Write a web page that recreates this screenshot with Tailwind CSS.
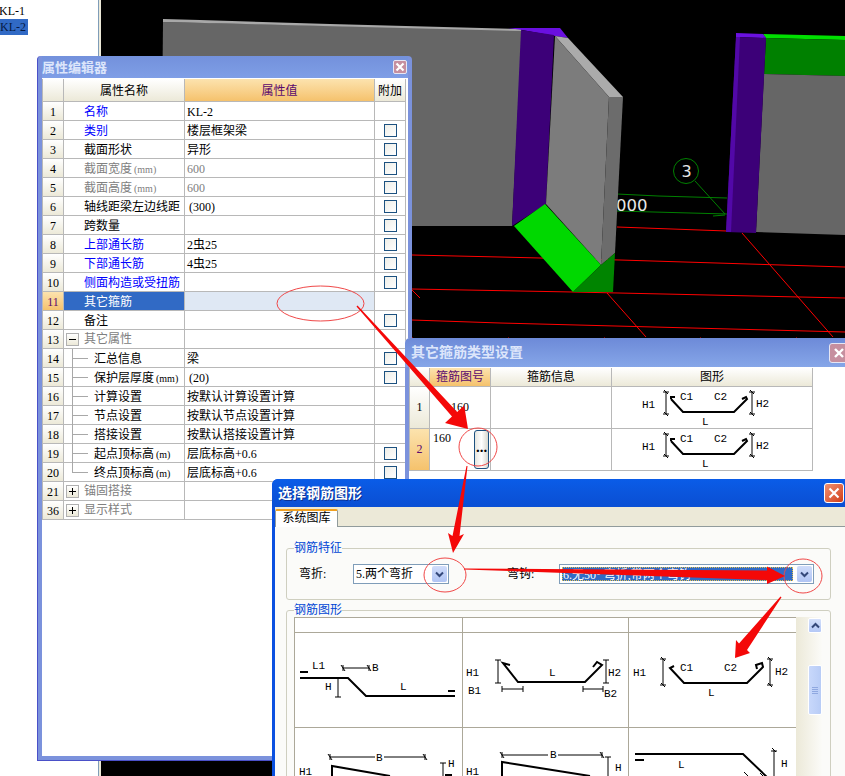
<!DOCTYPE html>
<html lang="zh">
<head>
<meta charset="utf-8">
<script src="https://cdn.jsdelivr.net/npm/@tailwindcss/browser@4"></script>
<title>属性编辑器</title>
</head>
<body class="m-0">
<div class="relative w-[845px] h-[776px] overflow-hidden bg-black text-black text-[12px] [font-family:'Liberation_Serif','Noto_Sans_CJK_SC',sans-serif]">

  <!-- 3D scene -->
  <svg class="absolute left-0 top-0" width="845" height="776" viewBox="0 0 845 776">
    <g stroke="#ff0000" stroke-width="1" fill="none">
      <path d="M412 255L500 257L620 260L845 267"/>
      <path d="M412 289L573 292L845 298"/>
      <path d="M412 320L500 323L845 332"/>
      <path d="M617 227L727 231"/>
      <path d="M742 233L833 337"/>
      <path d="M607 293L646 337"/>
      <path d="M412 290L420 298"/>
      <path d="M412 338L845 338" stroke-dasharray="1 95"/>
    </g>
    <g stroke="#008000" stroke-width="1" fill="none">
      <path d="M617 194L658 196L727 198"/>
      <path d="M617 211L727 214"/>
      <path d="M695 181L725 214"/>
      <path d="M713 216L725 215"/>
      <circle cx="686" cy="171" r="12.5"/>
    </g>
    <text x="616" y="211" fill="#e8e8e8" font-size="16.5" font-family="'DejaVu Sans',sans-serif">000</text>
    <text x="686.5" y="177" fill="#e8e8e8" font-size="16" text-anchor="middle" font-family="'DejaVu Sans',sans-serif">3</text>
    <polygon points="163,22 522,30 512,226 161,226" fill="#666666"/>
    <polygon points="163,19 200,20 330,24 521,29 522,31 163,22" fill="#a8a8a8"/>
    <polygon points="508,28 560,28 568,38 555,36 522,30" fill="#6a10e0"/>
    <polygon points="521,30 554,35 546,204 512,226" fill="#3c0078"/>
    <polygon points="555,36 568,38 623,97 609,97" fill="#ababab"/>
    <polygon points="555,36 609,97 601,265 546,204" fill="#7c7c7c"/>
    <polygon points="609,97 623,97 615,253 601,265" fill="#6c6c6c"/>
    <polygon points="514,226 545,204 601,265 573,292" fill="#00d800"/>
    <polygon points="573,292 601,265 615,253 613,292" fill="#008400"/>
    <polygon points="763,34 845,36 845,40 766,38" fill="#00e000"/>
    <polygon points="766,38 845,40 845,76 764,74" fill="#008000"/>
    <polygon points="764,74 845,76 845,235 756,232" fill="#666666"/>
    <polygon points="736,33 763,34 766,38 736,37" fill="#6a10e0"/>
    <polygon points="736,37 766,38 756,233 726,232" fill="#3c0078"/>
    <polygon points="736,37 740,37 731,232 726,232" fill="#5208a8"/>
  </svg>

  <!-- Left list panel -->
  <div class="absolute left-0 top-0 w-[101px] h-full bg-white border-r-[2px] border-[#ece9d8]">
    <div class="w-[99px] h-full border-r border-[#7f9db9] pt-[4px]">
      <div class="h-[15px] leading-[15px] -ml-[1px]">KL-1</div>
      <div class="h-[16px] w-[28px] leading-[16px] bg-[#316ac5] text-[#061a44] pl-0">KL-2</div>
    </div>
  </div>

  <!-- Property editor window -->
  <div class="absolute left-[37px] top-[56px] w-[375px] h-[705px] flex flex-col bg-[#7b92dc] rounded-t-[4px] border-l border-b border-[#4a50c8] px-[4px] pb-[4px]">
    <div class="h-[22px] shrink-0 flex items-center justify-between pl-[0px] pr-[1px] bg-linear-to-b from-[#7391dc] to-[#7f9ee6]">
      <span class="font-bold text-[13px] text-[#dde6fb] leading-[22px] pt-[2px]">属性编辑器</span>
      <span class="w-[14px] h-[14px] rounded-[2px] bg-[#c68f9f] border border-[#e6e6f4] flex items-center justify-center">
        <svg width="10" height="10" viewBox="0 0 10 10"><path d="M1.5 1.5L8.5 8.5M8.5 1.5L1.5 8.5" stroke="#fff" stroke-width="2.2"/></svg>
      </span>
    </div>
    <div class="flex-1 bg-white w-[366px] pt-[1px]">
      <div class="w-[364px] border-l border-[#b8b8b8]">
        <div class="flex h-[23px] border-b border-[#b8b8b8] leading-[24px] text-center">
          <div class="w-[21px] border-r border-[#b8b8b8] bg-linear-to-b from-white to-[#ece9d8]"></div>
          <div class="w-[121px] border-r border-[#b8b8b8] bg-linear-to-b from-white to-[#ece9d8]">属性名称</div>
          <div class="w-[190px] border-r border-[#b8b8b8] bg-linear-to-b from-[#fce3ae] to-[#f5c26c] text-[#5a0a6e]">属性值</div>
          <div class="w-[31px] border-r border-[#b8b8b8] bg-linear-to-b from-white to-[#ece9d8]">附加</div>
        </div>

        <div class="flex h-[19px] border-b border-[#b8b8b8] leading-[21px] whitespace-nowrap">
          <div class="w-[21px] border-r border-[#b8b8b8] bg-linear-to-b from-white to-[#ece9d8] text-center">1</div>
          <div class="w-[121px] border-r border-[#b8b8b8] pl-[20px] text-[#0000ff]">名称</div>
          <div class="w-[190px] border-r border-[#b8b8b8] pl-[2px]">KL-2</div>
          <div class="w-[31px] border-r border-[#b8b8b8]"></div>
        </div>
        <div class="flex h-[19px] border-b border-[#b8b8b8] leading-[21px] whitespace-nowrap">
          <div class="w-[21px] border-r border-[#b8b8b8] bg-linear-to-b from-white to-[#ece9d8] text-center">2</div>
          <div class="w-[121px] border-r border-[#b8b8b8] pl-[20px] text-[#0000ff]">类别</div>
          <div class="w-[190px] border-r border-[#b8b8b8] pl-[2px]">楼层框架梁</div>
          <div class="w-[31px] border-r border-[#b8b8b8] flex items-center justify-center"><span class="w-[13px] h-[13px] border border-[#1c5180] bg-linear-to-br from-[#eeeee8] to-white"></span></div>
        </div>
        <div class="flex h-[19px] border-b border-[#b8b8b8] leading-[21px] whitespace-nowrap">
          <div class="w-[21px] border-r border-[#b8b8b8] bg-linear-to-b from-white to-[#ece9d8] text-center">3</div>
          <div class="w-[121px] border-r border-[#b8b8b8] pl-[20px]">截面形状</div>
          <div class="w-[190px] border-r border-[#b8b8b8] pl-[2px]">异形</div>
          <div class="w-[31px] border-r border-[#b8b8b8] flex items-center justify-center"><span class="w-[13px] h-[13px] border border-[#1c5180] bg-linear-to-br from-[#eeeee8] to-white"></span></div>
        </div>
        <div class="flex h-[19px] border-b border-[#b8b8b8] leading-[21px] whitespace-nowrap">
          <div class="w-[21px] border-r border-[#b8b8b8] bg-linear-to-b from-white to-[#ece9d8] text-center">4</div>
          <div class="w-[121px] border-r border-[#b8b8b8] pl-[20px] text-[#808080]">截面宽度<span class="text-[10px] pl-[2px]">(mm)</span></div>
          <div class="w-[190px] border-r border-[#b8b8b8] pl-[2px] text-[#808080]">600</div>
          <div class="w-[31px] border-r border-[#b8b8b8] flex items-center justify-center"><span class="w-[13px] h-[13px] border border-[#1c5180] bg-linear-to-br from-[#eeeee8] to-white"></span></div>
        </div>
        <div class="flex h-[19px] border-b border-[#b8b8b8] leading-[21px] whitespace-nowrap">
          <div class="w-[21px] border-r border-[#b8b8b8] bg-linear-to-b from-white to-[#ece9d8] text-center">5</div>
          <div class="w-[121px] border-r border-[#b8b8b8] pl-[20px] text-[#808080]">截面高度<span class="text-[10px] pl-[2px]">(mm)</span></div>
          <div class="w-[190px] border-r border-[#b8b8b8] pl-[2px] text-[#808080]">600</div>
          <div class="w-[31px] border-r border-[#b8b8b8] flex items-center justify-center"><span class="w-[13px] h-[13px] border border-[#1c5180] bg-linear-to-br from-[#eeeee8] to-white"></span></div>
        </div>
        <div class="flex h-[19px] border-b border-[#b8b8b8] leading-[21px] whitespace-nowrap">
          <div class="w-[21px] border-r border-[#b8b8b8] bg-linear-to-b from-white to-[#ece9d8] text-center">6</div>
          <div class="w-[121px] border-r border-[#b8b8b8] pl-[20px]">轴线距梁左边线距</div>
          <div class="w-[190px] border-r border-[#b8b8b8] pl-[4px]">(300)</div>
          <div class="w-[31px] border-r border-[#b8b8b8] flex items-center justify-center"><span class="w-[13px] h-[13px] border border-[#1c5180] bg-linear-to-br from-[#eeeee8] to-white"></span></div>
        </div>
        <div class="flex h-[19px] border-b border-[#b8b8b8] leading-[21px] whitespace-nowrap">
          <div class="w-[21px] border-r border-[#b8b8b8] bg-linear-to-b from-white to-[#ece9d8] text-center">7</div>
          <div class="w-[121px] border-r border-[#b8b8b8] pl-[20px]">跨数量</div>
          <div class="w-[190px] border-r border-[#b8b8b8] pl-[2px]"></div>
          <div class="w-[31px] border-r border-[#b8b8b8] flex items-center justify-center"><span class="w-[13px] h-[13px] border border-[#1c5180] bg-linear-to-br from-[#eeeee8] to-white"></span></div>
        </div>
        <div class="flex h-[19px] border-b border-[#b8b8b8] leading-[21px] whitespace-nowrap">
          <div class="w-[21px] border-r border-[#b8b8b8] bg-linear-to-b from-white to-[#ece9d8] text-center">8</div>
          <div class="w-[121px] border-r border-[#b8b8b8] pl-[20px] text-[#0000ff]">上部通长筋</div>
          <div class="w-[190px] border-r border-[#b8b8b8] pl-[2px]">2虫25</div>
          <div class="w-[31px] border-r border-[#b8b8b8] flex items-center justify-center"><span class="w-[13px] h-[13px] border border-[#1c5180] bg-linear-to-br from-[#eeeee8] to-white"></span></div>
        </div>
        <div class="flex h-[19px] border-b border-[#b8b8b8] leading-[21px] whitespace-nowrap">
          <div class="w-[21px] border-r border-[#b8b8b8] bg-linear-to-b from-white to-[#ece9d8] text-center">9</div>
          <div class="w-[121px] border-r border-[#b8b8b8] pl-[20px] text-[#0000ff]">下部通长筋</div>
          <div class="w-[190px] border-r border-[#b8b8b8] pl-[2px]">4虫25</div>
          <div class="w-[31px] border-r border-[#b8b8b8] flex items-center justify-center"><span class="w-[13px] h-[13px] border border-[#1c5180] bg-linear-to-br from-[#eeeee8] to-white"></span></div>
        </div>
        <div class="flex h-[19px] border-b border-[#b8b8b8] leading-[21px] whitespace-nowrap">
          <div class="w-[21px] border-r border-[#b8b8b8] bg-linear-to-b from-white to-[#ece9d8] text-center">10</div>
          <div class="w-[121px] border-r border-[#b8b8b8] pl-[20px] text-[#0000ff]">侧面构造或受扭筋</div>
          <div class="w-[190px] border-r border-[#b8b8b8] pl-[2px]"></div>
          <div class="w-[31px] border-r border-[#b8b8b8] flex items-center justify-center"><span class="w-[13px] h-[13px] border border-[#1c5180] bg-linear-to-br from-[#eeeee8] to-white"></span></div>
        </div>
        <div class="flex h-[19px] border-b border-[#b8b8b8] leading-[21px] whitespace-nowrap">
          <div class="w-[21px] border-r border-[#b8b8b8] bg-linear-to-b from-[#fce3ae] to-[#f5c26c] text-center text-[#5a0a6e]">11</div>
          <div class="w-[121px] border-r border-[#b8b8b8] pl-[20px] bg-[#316ac5] text-white">其它箍筋</div>
          <div class="w-[190px] border-r border-[#b8b8b8] pl-[2px] bg-[#dfe8f4]"></div>
          <div class="w-[31px] border-r border-[#b8b8b8]"></div>
        </div>
        <div class="flex h-[19px] border-b border-[#b8b8b8] leading-[21px] whitespace-nowrap">
          <div class="w-[21px] border-r border-[#b8b8b8] bg-linear-to-b from-white to-[#ece9d8] text-center">12</div>
          <div class="w-[121px] border-r border-[#b8b8b8] pl-[20px]">备注</div>
          <div class="w-[190px] border-r border-[#b8b8b8] pl-[2px]"></div>
          <div class="w-[31px] border-r border-[#b8b8b8] flex items-center justify-center"><span class="w-[13px] h-[13px] border border-[#1c5180] bg-linear-to-br from-[#eeeee8] to-white"></span></div>
        </div>
        <div class="flex h-[19px] border-b border-[#b8b8b8] leading-[21px] whitespace-nowrap">
          <div class="w-[21px] border-r border-[#b8b8b8] bg-linear-to-b from-white to-[#ece9d8] text-center">13</div>
          <div class="w-[121px] border-r border-[#b8b8b8] pl-[2px] flex items-center text-[#808080]">
            <span class="w-[13px] h-[13px] border border-[#b0b0b0] bg-linear-to-b from-white to-[#ece9d8] flex items-center justify-center mr-[5px]"><span class="w-[7px] h-px bg-black"></span></span>其它属性
          </div>
          <div class="w-[190px] border-r border-[#b8b8b8] pl-[2px]"></div>
          <div class="w-[31px] border-r border-[#b8b8b8]"></div>
        </div>
        <div class="flex h-[19px] border-b border-[#b8b8b8] leading-[21px] whitespace-nowrap">
          <div class="w-[21px] border-r border-[#b8b8b8] bg-linear-to-b from-white to-[#ece9d8] text-center">14</div>
          <div class="w-[121px] border-r border-[#b8b8b8] flex"><span class="w-[16px] h-[19px] ml-[8px] mr-[6px] border-l border-[#a8a8a8]"><span class="block h-[10px] border-b border-[#a8a8a8]"></span></span>汇总信息</div>
          <div class="w-[190px] border-r border-[#b8b8b8] pl-[2px]">梁</div>
          <div class="w-[31px] border-r border-[#b8b8b8] flex items-center justify-center"><span class="w-[13px] h-[13px] border border-[#1c5180] bg-linear-to-br from-[#eeeee8] to-white"></span></div>
        </div>
        <div class="flex h-[19px] border-b border-[#b8b8b8] leading-[21px] whitespace-nowrap">
          <div class="w-[21px] border-r border-[#b8b8b8] bg-linear-to-b from-white to-[#ece9d8] text-center">15</div>
          <div class="w-[121px] border-r border-[#b8b8b8] flex"><span class="w-[16px] h-[19px] ml-[8px] mr-[6px] border-l border-[#a8a8a8]"><span class="block h-[10px] border-b border-[#a8a8a8]"></span></span>保护层厚度<span class="text-[10px] pl-[2px]">(mm)</span></div>
          <div class="w-[190px] border-r border-[#b8b8b8] pl-[4px]">(20)</div>
          <div class="w-[31px] border-r border-[#b8b8b8] flex items-center justify-center"><span class="w-[13px] h-[13px] border border-[#1c5180] bg-linear-to-br from-[#eeeee8] to-white"></span></div>
        </div>
        <div class="flex h-[19px] border-b border-[#b8b8b8] leading-[21px] whitespace-nowrap">
          <div class="w-[21px] border-r border-[#b8b8b8] bg-linear-to-b from-white to-[#ece9d8] text-center">16</div>
          <div class="w-[121px] border-r border-[#b8b8b8] flex"><span class="w-[16px] h-[19px] ml-[8px] mr-[6px] border-l border-[#a8a8a8]"><span class="block h-[10px] border-b border-[#a8a8a8]"></span></span>计算设置</div>
          <div class="w-[190px] border-r border-[#b8b8b8] pl-[2px]">按默认计算设置计算</div>
          <div class="w-[31px] border-r border-[#b8b8b8]"></div>
        </div>
        <div class="flex h-[19px] border-b border-[#b8b8b8] leading-[21px] whitespace-nowrap">
          <div class="w-[21px] border-r border-[#b8b8b8] bg-linear-to-b from-white to-[#ece9d8] text-center">17</div>
          <div class="w-[121px] border-r border-[#b8b8b8] flex"><span class="w-[16px] h-[19px] ml-[8px] mr-[6px] border-l border-[#a8a8a8]"><span class="block h-[10px] border-b border-[#a8a8a8]"></span></span>节点设置</div>
          <div class="w-[190px] border-r border-[#b8b8b8] pl-[2px]">按默认节点设置计算</div>
          <div class="w-[31px] border-r border-[#b8b8b8]"></div>
        </div>
        <div class="flex h-[19px] border-b border-[#b8b8b8] leading-[21px] whitespace-nowrap">
          <div class="w-[21px] border-r border-[#b8b8b8] bg-linear-to-b from-white to-[#ece9d8] text-center">18</div>
          <div class="w-[121px] border-r border-[#b8b8b8] flex"><span class="w-[16px] h-[19px] ml-[8px] mr-[6px] border-l border-[#a8a8a8]"><span class="block h-[10px] border-b border-[#a8a8a8]"></span></span>搭接设置</div>
          <div class="w-[190px] border-r border-[#b8b8b8] pl-[2px]">按默认搭接设置计算</div>
          <div class="w-[31px] border-r border-[#b8b8b8]"></div>
        </div>
        <div class="flex h-[19px] border-b border-[#b8b8b8] leading-[21px] whitespace-nowrap">
          <div class="w-[21px] border-r border-[#b8b8b8] bg-linear-to-b from-white to-[#ece9d8] text-center">19</div>
          <div class="w-[121px] border-r border-[#b8b8b8] flex"><span class="w-[16px] h-[19px] ml-[8px] mr-[6px] border-l border-[#a8a8a8]"><span class="block h-[10px] border-b border-[#a8a8a8]"></span></span>起点顶标高<span class="text-[10px] pl-[2px]">(m)</span></div>
          <div class="w-[190px] border-r border-[#b8b8b8] pl-[2px]">层底标高+0.6</div>
          <div class="w-[31px] border-r border-[#b8b8b8] flex items-center justify-center"><span class="w-[13px] h-[13px] border border-[#1c5180] bg-linear-to-br from-[#eeeee8] to-white"></span></div>
        </div>
        <div class="flex h-[19px] border-b border-[#b8b8b8] leading-[21px] whitespace-nowrap">
          <div class="w-[21px] border-r border-[#b8b8b8] bg-linear-to-b from-white to-[#ece9d8] text-center">20</div>
          <div class="w-[121px] border-r border-[#b8b8b8] flex"><span class="w-[16px] h-[10px] ml-[8px] mr-[6px] border-l border-b border-[#a8a8a8]"></span>终点顶标高<span class="text-[10px] pl-[2px]">(m)</span></div>
          <div class="w-[190px] border-r border-[#b8b8b8] pl-[2px]">层底标高+0.6</div>
          <div class="w-[31px] border-r border-[#b8b8b8] flex items-center justify-center"><span class="w-[13px] h-[13px] border border-[#1c5180] bg-linear-to-br from-[#eeeee8] to-white"></span></div>
        </div>
        <div class="flex h-[19px] border-b border-[#b8b8b8] leading-[21px] whitespace-nowrap">
          <div class="w-[21px] border-r border-[#b8b8b8] bg-linear-to-b from-white to-[#ece9d8] text-center">21</div>
          <div class="w-[121px] border-r border-[#b8b8b8] pl-[2px] flex items-center text-[#808080]">
            <span class="relative w-[13px] h-[13px] border border-[#b0b0b0] bg-linear-to-b from-white to-[#ece9d8] flex items-center justify-center mr-[5px]"><span class="w-[7px] h-px bg-black"></span><span class="absolute left-[5px] top-[2px] w-px h-[7px] bg-black"></span></span>锚固搭接
          </div>
          <div class="w-[190px] border-r border-[#b8b8b8] pl-[2px]"></div>
          <div class="w-[31px] border-r border-[#b8b8b8]"></div>
        </div>
        <div class="flex h-[19px] border-b border-[#b8b8b8] leading-[21px] whitespace-nowrap">
          <div class="w-[21px] border-r border-[#b8b8b8] bg-linear-to-b from-white to-[#ece9d8] text-center">36</div>
          <div class="w-[121px] border-r border-[#b8b8b8] pl-[2px] flex items-center text-[#808080]">
            <span class="relative w-[13px] h-[13px] border border-[#b0b0b0] bg-linear-to-b from-white to-[#ece9d8] flex items-center justify-center mr-[5px]"><span class="w-[7px] h-px bg-black"></span><span class="absolute left-[5px] top-[2px] w-px h-[7px] bg-black"></span></span>显示样式
          </div>
          <div class="w-[190px] border-r border-[#b8b8b8] pl-[2px]"></div>
          <div class="w-[31px] border-r border-[#b8b8b8]"></div>
        </div>
      </div>
    </div>
  </div>

  <!-- Stirrup type window -->
  <div class="absolute left-[405px] top-[338px] w-[460px] h-[145px] flex flex-col bg-white rounded-t-[5px] overflow-hidden">
    <div class="h-[29px] shrink-0 flex items-center justify-between pl-[6px] pr-[16px] bg-linear-to-b from-[#6d8ad8] to-[#86a6e8]">
      <span class="font-bold text-[14px] text-[#dde6fb]">其它箍筋类型设置</span>
      <span class="w-[20px] h-[20px] rounded-[3px] bg-[#c68f9f] border border-[#e6e6f4] flex items-center justify-center">
        <svg width="12" height="12" viewBox="0 0 12 12"><path d="M2 2L10 10M10 2L2 10" stroke="#fff" stroke-width="2.4"/></svg>
      </span>
    </div>
    <div class="flex-1 flex">
      <div class="w-[4px] bg-[#7b92dc]"></div>
      <div class="pt-[1px]">
        <div class="w-[404px] border-l border-[#b8b8b8]">
          <div class="flex h-[19px] border-b border-[#b8b8b8] leading-[19px] text-center">
            <div class="w-[20px] border-r border-[#b8b8b8] bg-linear-to-b from-white to-[#ece9d8]"></div>
            <div class="w-[61px] border-r border-[#b8b8b8] bg-linear-to-b from-[#fce3ae] to-[#f5c26c] text-[#5a0a6e]">箍筋图号</div>
            <div class="w-[121px] border-r border-[#b8b8b8] bg-linear-to-b from-white to-[#ece9d8]">箍筋信息</div>
            <div class="w-[201px] border-r border-[#b8b8b8] bg-linear-to-b from-white to-[#ece9d8]">图形</div>
          </div>
          <div class="flex h-[42px] border-b border-[#b8b8b8]">
            <div class="w-[20px] border-r border-[#b8b8b8] bg-linear-to-b from-white to-[#ece9d8] text-center leading-[41px]">1</div>
            <div class="w-[61px] border-r border-[#b8b8b8] text-center leading-[41px]">160</div>
            <div class="w-[121px] border-r border-[#b8b8b8]"></div>
            <div class="w-[201px] border-r border-[#b8b8b8]">
              <svg width="200" height="41" viewBox="612 387 200 41" font-size="11" font-family="'Liberation Mono',monospace" fill="#000">
                <g id="stirrup-fig">
                  <path d="M671 399L671 397L675 397M671 399L683 412L734 412L747 399L746 397L742 399" fill="none" stroke="#000" stroke-width="2"/>
                  <path d="M666 392V414M752 392V414M663 392H669M663 414H669M749 392H755M749 414H755" fill="none" stroke="#000"/>
                  <path d="M664 390L668 394M664 412L668 416M750 390L754 394M750 412L754 416" fill="none" stroke="#000"/>
                  <text x="642" y="408">H1</text>
                  <text x="680" y="400">C1</text>
                  <text x="714" y="400">C2</text>
                  <text x="702" y="425">L</text>
                  <text x="756" y="407">H2</text>
                </g>
              </svg>
            </div>
          </div>
          <div class="flex h-[42px] border-b border-[#b8b8b8]">
            <div class="w-[20px] border-r border-[#b8b8b8] bg-linear-to-b from-[#fce3ae] to-[#f5c26c] text-center leading-[41px] text-[#5a0a6e]">2</div>
            <div class="w-[61px] border-r border-[#b8b8b8] flex justify-between pl-[3px] pr-[1px] pt-[1px]">
              <span class="leading-[16px]">160</span>
              <span class="w-[15px] h-[39px] rounded-[3px] border border-[#1c5180] bg-linear-to-r from-[#e6e6e0] via-white to-[#d8d8d0] flex items-center justify-center font-bold text-[15px] leading-none pb-[4px]">...</span>
            </div>
            <div class="w-[121px] border-r border-[#b8b8b8]"></div>
            <div class="w-[201px] border-r border-[#b8b8b8]">
              <svg width="200" height="41" viewBox="612 387 200 41" font-size="11" font-family="'Liberation Mono',monospace" fill="#000">
                <use href="#stirrup-fig"/>
              </svg>
            </div>
          </div>
        </div>
      </div>
    </div>
  </div>

  <!-- Rebar shape chooser window -->
  <div class="absolute left-[272px] top-[479px] w-[590px] h-[310px] flex flex-col bg-[#0a50e0] rounded-t-[6px] pl-[3px]">
    <div class="h-[28px] shrink-0 -ml-[3px] rounded-t-[6px] flex items-center justify-between pl-[6px] pr-[18px] bg-linear-to-b from-[#0a5ce8] via-[#0b55dc] to-[#0a4fd4]">
      <span class="font-bold text-[14px] text-white [text-shadow:1px_1px_0_#0a2f90]">选择钢筋图形</span>
      <span class="w-[20px] h-[20px] mt-[-1px] rounded-[3px] bg-linear-to-br from-[#f09070] to-[#d03a10] border border-white flex items-center justify-center">
        <svg width="12" height="12" viewBox="0 0 12 12"><path d="M1.5 1.5L10.5 10.5M10.5 1.5L1.5 10.5" stroke="#fff" stroke-width="2.2"/></svg>
      </span>
    </div>
    <div class="flex-1 flex flex-col bg-[#fbfbf9]">
      <div class="h-[20px] shrink-0 bg-[#ece9d8] border-b border-[#919b9c] pt-[2px] leading-none">
        <div class="w-[63px] h-[18px] ml-[0px] bg-white border-x border-[#919b9c] border-t-[2px] border-t-[#f0a020] rounded-t-[2px] text-center text-[12px] leading-[15px]">系统图库</div>
      </div>
      <div class="flex-1 pl-[11px] pt-[21px]">
        <!-- group: features -->
        <div class="w-[545px] h-[52px] rounded-[3px] border border-[#cfcfc0] pl-[12px]">
          <div class="-mt-[8px] -ml-[5px] w-fit bg-[#fbfbf9] text-[#0046d5] leading-[14px]">钢筋特征</div>
          <div class="flex items-center mt-[9px] h-[20px]">
            <span class="w-[54px] leading-[20px]">弯折:</span>
            <div class="w-[96px] h-[20px] border border-[#7f9db9] bg-white flex items-center justify-between pr-[1px] pl-[2px] whitespace-nowrap">
              <span class="leading-[18px]">5.两个弯折</span>
              <span class="w-[15px] h-[16px] rounded-[2px] bg-linear-to-b from-[#d0dcfa] to-[#b0c4f4] flex items-center justify-center"><svg width="9" height="7" viewBox="0 0 9 7"><path d="M1 1.5L4.5 5L8 1.5" fill="none" stroke="#34487a" stroke-width="2"/></svg></span>
            </div>
            <span class="w-[52px] ml-[58px] leading-[20px]">弯钩:</span>
            <div class="w-[255px] h-[20px] border border-[#7f9db9] bg-white flex items-center justify-between pr-[1px] pl-[2px] whitespace-nowrap">
              <span class="w-[231px] h-[14px] bg-[#316ac5] text-white leading-[14px] overflow-hidden border border-dotted border-[#e0c050]">6.无50° 弯折,带两个弯钩</span>
              <span class="w-[15px] h-[16px] rounded-[2px] bg-linear-to-b from-[#d0dcfa] to-[#b0c4f4] flex items-center justify-center"><svg width="9" height="7" viewBox="0 0 9 7"><path d="M1 1.5L4.5 5L8 1.5" fill="none" stroke="#34487a" stroke-width="2"/></svg></span>
            </div>
          </div>
        </div>
        <!-- group: shapes -->
        <div class="w-[545px] h-[220px] mt-[10px] rounded-[3px] border border-[#cfcfc0] pl-[7px]">
          <div class="-mt-[8px] w-fit bg-[#fbfbf9] text-[#0046d5] leading-[14px]">钢筋图形</div>
          <div class="flex">
            <div class="grid grid-cols-[168px_166px_168px] grid-rows-[15px_95px_95px] w-[502px] bg-white border-l border-t border-[#aca899]">
              <div class="border-r border-b border-[#aca899]"></div>
              <div class="border-r border-b border-[#aca899]"></div>
              <div class="border-r border-b border-[#aca899]"></div>

              <div class="border-r border-b border-[#aca899]">
                <svg width="167" height="94" viewBox="295 633 167 94" font-size="11" font-family="'Liberation Mono',monospace" fill="#000">
                  <path d="M300 672H308M448 691H455" stroke="#000" stroke-width="2"/>
                  <path d="M300 678H348L366 696H455" fill="none" stroke="#000" stroke-width="2"/>
                  <path d="M343 668H369M338 678V697M335 678H341M335 697H341M343 665V671M369 665V671M341 665L345 671M367 665L371 671" fill="none" stroke="#000"/>
                  <text x="312" y="669">L1</text>
                  <text x="372" y="671">B</text>
                  <text x="325" y="690">H</text>
                  <text x="400" y="690">L</text>
                </svg>
              </div>
              <div class="border-r border-b border-[#aca899]">
                <svg width="165" height="94" viewBox="463 633 165 94" font-size="11" font-family="'Liberation Mono',monospace" fill="#000">
                  <path d="M510 665L503 663L518 682H585L602 665L597 662L593 667" fill="none" stroke="#000" stroke-width="2"/>
                  <path d="M498 660V683M606 660V683M495 660H501M495 683H501M603 660H609M603 683H609M502 689H523M583 689H603M502 686V692M523 686V692M583 686V692M603 686V692" fill="none" stroke="#000"/>
                  <text x="466" y="676">H1</text>
                  <text x="468" y="694">B1</text>
                  <text x="549" y="676">L</text>
                  <text x="608" y="676">H2</text>
                  <text x="604" y="697">B2</text>
                </svg>
              </div>
              <div class="border-r border-b border-[#aca899]">
                <svg width="167" height="94" viewBox="629 633 167 94" font-size="11" font-family="'Liberation Mono',monospace" fill="#000">
                  <path d="M674 666L670 668L684 683H747L763 667L762 663L756 665L757 669" fill="none" stroke="#000" stroke-width="2"/>
                  <path d="M663 659V685M770 659V685M660 659H666M660 685H666M767 659H773M767 685H773M661 657L665 661M661 683L665 687M768 657L772 661M768 683L772 687" fill="none" stroke="#000"/>
                  <text x="633" y="676">H1</text>
                  <text x="680" y="671">C1</text>
                  <text x="724" y="671">C2</text>
                  <text x="708" y="696">L</text>
                  <text x="775" y="675">H2</text>
                </svg>
              </div>

              <div class="border-r border-b border-[#aca899]">
                <svg width="167" height="94" viewBox="295 728 167 94" font-size="11" font-family="'Liberation Mono',monospace" fill="#000">
                  <path d="M332 780V766L390 776" fill="none" stroke="#000" stroke-width="2"/>
                  <path d="M445 775H452" stroke="#000" stroke-width="2"/>
                  <path d="M330 757H375M384 757H425M330 754V760M425 754V760M328 754L332 760M423 754L427 760M443 763V776M440 763H446" fill="none" stroke="#000"/>
                  <text x="376" y="761">B</text>
                  <text x="299" y="775">H1</text>
                  <text x="448" y="767">H</text>
                </svg>
              </div>
              <div class="border-r border-b border-[#aca899]">
                <svg width="165" height="94" viewBox="463 728 165 94" font-size="11" font-family="'Liberation Mono',monospace" fill="#000">
                  <path d="M502 780V762L590 776" fill="none" stroke="#000" stroke-width="2"/>
                  <path d="M502 755H548M558 755H602M502 752V758M602 752V758M500 752L504 758M600 752L604 758M608 757V780M605 757H611" fill="none" stroke="#000"/>
                  <text x="550" y="758">B</text>
                  <text x="466" y="775">H1</text>
                  <text x="615" y="771">H</text>
                </svg>
              </div>
              <div class="border-r border-b border-[#aca899]">
                <svg width="167" height="94" viewBox="629 728 167 94" font-size="11" font-family="'Liberation Mono',monospace" fill="#000">
                  <path d="M635 754H743L770 780" fill="none" stroke="#000" stroke-width="2"/>
                  <path d="M635 760H644" stroke="#000" stroke-width="2"/>
                  <path d="M774 750V780M771 751H777M772 748L776 752M744 772L748 776M760 773L764 777" fill="none" stroke="#000"/>
                  <text x="678" y="768">L</text>
                  <text x="781" y="767">H</text>
                </svg>
              </div>
            </div>
            <!-- scrollbar -->
            <div class="w-[26px] h-[206px] bg-linear-to-r from-[#ece9d8] to-[#fbfbf8] pl-[12px] pt-[1px]">
              <div class="w-[14px] h-[15px] rounded-[2px] border border-white bg-linear-to-b from-[#d4e0fb] to-[#b4c8f6] flex items-center justify-center"><svg width="9" height="7" viewBox="0 0 9 7"><path d="M1 5.5L4.5 2L8 5.5" fill="none" stroke="#34487a" stroke-width="2"/></svg></div>
              <div class="w-[14px] h-[50px] mt-[32px] rounded-[2px] border border-white bg-linear-to-r from-[#c8d8fb] to-[#b8ccf6] flex flex-col items-center justify-center gap-px"><span class="w-[6px] h-px bg-[#8fa8e0]"></span><span class="w-[6px] h-px bg-[#8fa8e0]"></span><span class="w-[6px] h-px bg-[#8fa8e0]"></span><span class="w-[6px] h-px bg-[#8fa8e0]"></span></div>
            </div>
          </div>
        </div>
      </div>
    </div>
  </div>

  <!-- Red annotations on top of everything -->
  <svg class="absolute left-0 top-0 pointer-events-none" width="845" height="776" viewBox="0 0 845 776">
    <g fill="none" stroke="#f04848" stroke-width="1">
      <ellipse cx="320.5" cy="303.5" rx="43.5" ry="17.5"/>
      <circle cx="478" cy="447" r="19"/>
      <ellipse cx="445" cy="575" rx="21" ry="17"/>
      <ellipse cx="803" cy="576" rx="19" ry="17"/>
    </g>
    <g fill="#f40808">
      <polygon points="357.5,305.5 457.2,411.9 464.2,405.5 468,429 445,422.9 452,416.5 356.5,306.5"/>
      <polygon points="466.5,466 467.5,466 459.5,536 464,534 453,553 448,533 452.5,536"/>
      <polygon points="464,568.5 767,570.5 767,566.5 785,576 767,584 767,580 464,569.5"/>
      <polygon points="780.5,596.5 781.5,597.3 747,650 750,653 735,658 736,640 739,643.5"/>
    </g>
  </svg>
</div>
</body>
</html>
